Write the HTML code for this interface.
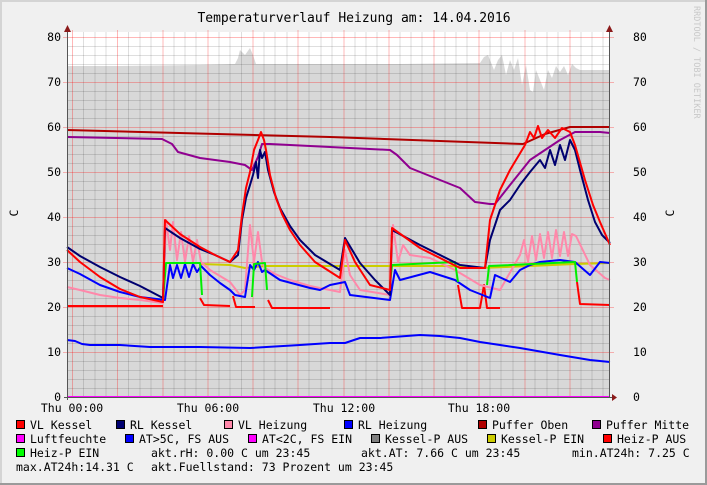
<!DOCTYPE html>
<html><head><meta charset="utf-8"><style>
html,body{margin:0;padding:0}
body{width:707px;height:485px;overflow:hidden;background:#f0f0f0;font-family:"DejaVu Sans Mono","Liberation Mono",monospace}
svg{position:absolute;left:0;top:0}
</style></head><body>
<svg width="707" height="485" viewBox="0 0 707 485" xmlns="http://www.w3.org/2000/svg" font-family="DejaVu Sans Mono, Liberation Mono, monospace">
<rect x="0" y="0" width="707" height="485" fill="#f0f0f0"/>
<path d="M0,1H706M1,0V484" stroke="#d4d4d4" stroke-width="2"/>
<path d="M0,484H707M706,0V485" stroke="#9a9a9a" stroke-width="2"/>
<rect x="67" y="32" width="543" height="365" fill="#fff"/>
<polygon fill="#d8d8d8" points="67,397 67,66 120,66 200,65 235,64 238,58 240,50 245,55 250,48 253,55 256,64 300,64 400,64 480,63 484,57 488,55 490,60 494,70 498,60 502,55 506,75 510,60 514,70 518,58 522,85 526,65 530,90 533,92 536,70 540,80 544,90 548,70 552,78 556,66 560,72 564,66 568,75 572,64 576,68 580,70 610,70 610,397"/>
<g stroke="#000" stroke-opacity="0.13" stroke-width="1">
<path d="M83.5,32V397M95,32V397M106,32V397M128.5,32V397M140,32V397M151,32V397M174,32V397M185,32V397M196,32V397M219,32V397M230,32V397M241.5,32V397M264,32V397M275,32V397M287,32V397M309,32V397M321,32V397M332,32V397M355,32V397M366,32V397M377,32V397M400,32V397M411,32V397M422,32V397M445,32V397M456,32V397M467,32V397M490,32V397M501,32V397M513,32V397M535,32V397M547,32V397M558,32V397M581,32V397M592,32V397M603,32V397"/>
<path d="M67,46.5H610M67,55.5H610M67,64.5H610M67,73.5H610M67,91.5H610M67,100.5H610M67,109.5H610M67,118.5H610M67,136.5H610M67,145.5H610M67,154.5H610M67,163.5H610M67,181.5H610M67,190.5H610M67,199.5H610M67,208.5H610M67,226.5H610M67,235.5H610M67,244.5H610M67,253.5H610M67,271.5H610M67,280.5H610M67,289.5H610M67,298.5H610M67,316.5H610M67,325.5H610M67,334.5H610M67,343.5H610M67,361.5H610M67,370.5H610M67,379.5H610M67,388.5H610"/>
</g>
<g stroke="#ff0000" stroke-opacity="0.28" stroke-width="1">
<path d="M72.5,30V397M117.5,30V397M163,30V397M208,30V397M253,30V397M298,30V397M344,30V397M389,30V397M434,30V397M479,30V397M525,30V397M570,30V397"/>
<path d="M63,37.5H614M63,82.5H614M63,127.5H614M63,172.5H614M63,217.5H614M63,262.5H614M63,307.5H614M63,352.5H614"/>
</g>
<g fill="none" stroke-width="2" stroke-linejoin="round">
<polyline stroke="#b00000" points="67,130 330,137 523,144 545,134 570,127 610,127"/>
<polyline stroke="#900090" points="67,137 162,139 172,144 178,152 200,158 230,162 245,165 252,170 258,157 262,144 270,144 330,147 390,150 397,155 410,168 435,178 460,188 475,202 490,204 495,204 510,185 530,160 560,140 575,132 600,132 610,133"/>
<polyline stroke="#0000ff" points="67,340 75,341 82,344 90,345 100,345 120,345 150,347 200,347 250,348 300,345 330,343 345,343 360,338 380,338 420,335 440,336 460,338 480,342 500,345 520,348 560,355 590,360 610,362"/>
<polyline stroke="#cccc00" points="200,264 230,265 245,268 265,266 300,266 390,266 450,266 480,268 530,266 575,264 610,263"/>
<polyline stroke="#ff0000" points="67,306 163,306"/>
<polyline stroke="#ff0000" points="200,298 204,305 230,306"/>
<polyline stroke="#ff0000" points="233,296 236,307 255,307"/>
<polyline stroke="#ff0000" points="268,300 272,308 330,308"/>
<polyline stroke="#ff0000" points="458,285 462,308 480,308 484,285 487,308 500,308"/>
<polyline stroke="#ff0000" points="577,282 580,304 610,305"/>
<polyline stroke="#ff88aa" points="67,287 80,290 100,295 120,298 140,300 163,303 166,220 170,250 173,222 177,260 181,232 185,262 189,236 193,262 197,240 201,262 210,270 230,282 240,295 245,290 250,225 254,262 258,232 262,262 265,268 275,274 290,280 310,286 340,292 345,250 350,275 360,290 390,295 393,225 398,262 403,245 410,255 430,258 455,270 480,285 500,290 520,255 524,240 528,262 532,236 536,260 540,234 544,258 548,232 552,258 556,230 560,256 564,232 568,256 572,234 576,236 590,265 605,278 610,280"/>
<polyline stroke="#0000ff" points="67,268 80,274 100,285 120,292 140,297 165,300 170,265 173,278 177,265 181,278 185,264 189,277 193,264 197,272 201,266 210,275 220,283 230,290 235,295 245,297 250,265 254,270 258,262 262,272 265,270 280,280 310,288 320,290 330,285 345,282 350,295 390,300 395,270 400,280 430,272 455,280 470,290 490,298 495,275 510,282 520,270 530,265 540,262 560,260 575,262 590,275 600,262 610,263"/>
<polyline stroke="#00ee00" points="163,300 166,263 200,263 202,295"/>
<polyline stroke="#00ee00" points="252,297 254,264 265,263 267,290"/>
<polyline stroke="#00ee00" points="390,284 392,265 455,262 458,282"/>
<polyline stroke="#00ee00" points="487,285 489,266 575,262 577,282"/>
<polyline stroke="#000070" points="67,247 80,256 100,267 120,277 140,286 163,298 165,228 180,238 200,249 215,255 230,262 238,255 242,220 246,198 250,185 253,175 256,162 258,178 260,150 262,158 265,152 268,170 274,192 280,208 290,226 300,240 315,255 340,270 345,238 360,263 375,280 390,295 392,230 420,245 460,265 485,268 490,240 495,225 500,210 510,200 520,185 530,172 540,160 545,168 550,150 555,165 560,145 565,160 570,140 575,150 580,170 588,200 595,222 602,235 610,243"/>
<polyline stroke="#ff0000" points="67,250 80,262 100,277 120,289 140,297 163,302 165,220 180,234 200,247 215,255 230,262 238,250 242,215 246,188 250,172 254,150 258,140 261,132 264,140 266,150 270,175 276,198 282,214 290,230 300,245 315,262 340,278 345,240 355,262 370,285 390,290 392,228 420,248 460,268 485,268 490,220 500,190 510,170 525,145 530,132 534,138 538,126 542,138 548,130 555,138 562,128 570,132 575,145 585,180 593,205 600,222 610,245"/>
<polyline stroke="#ff00ff" points="67,397 610,397"/>
</g>
<path d="M67.5,30V400M609.5,30V397M64,397.5H614" stroke="#555" stroke-width="1"/>
<path d="M64,32L67.5,25L71,32Z M606,32L609.5,25L613,32Z M612,394L617,397.5L612,401Z" fill="#8b1a1a"/>
<text x="354" y="22" font-size="13" text-anchor="middle" fill="#000">Temperaturverlauf Heizung am: 14.04.2016</text>
<g font-size="11.5" fill="#000">
<g text-anchor="end">
<text x="61" y="41">80</text><text x="61" y="86">70</text><text x="61" y="131">60</text><text x="61" y="176">50</text><text x="61" y="221">40</text><text x="61" y="266">30</text><text x="61" y="311">20</text><text x="61" y="356">10</text><text x="61" y="401">0</text>
</g>
<text x="633" y="41">80</text><text x="633" y="86">70</text><text x="633" y="131">60</text><text x="633" y="176">50</text><text x="633" y="221">40</text><text x="633" y="266">30</text><text x="633" y="311">20</text><text x="633" y="356">10</text><text x="633" y="401">0</text>
<text transform="translate(18,213) rotate(-90)" text-anchor="middle">C</text>
<text transform="translate(674,213) rotate(-90)" text-anchor="middle">C</text>
<g text-anchor="middle"><text x="72" y="412">Thu 00:00</text><text x="208" y="412">Thu 06:00</text><text x="344" y="412">Thu 12:00</text><text x="479" y="412">Thu 18:00</text></g>
</g>
<text transform="translate(694,6) rotate(90)" font-size="8.5" fill="#c8c8c8">RRDTOOL / TOBI OETIKER</text>
<g stroke="#000" stroke-width="1">
<rect x="16.5" y="420.5" width="8" height="8" fill="#ff0000"/>
<rect x="116.5" y="420.5" width="8" height="8" fill="#000070"/>
<rect x="224.5" y="420.5" width="8" height="8" fill="#ff88aa"/>
<rect x="344.5" y="420.5" width="8" height="8" fill="#0000ff"/>
<rect x="478.5" y="420.5" width="8" height="8" fill="#b00000"/>
<rect x="592.5" y="420.5" width="8" height="8" fill="#900090"/>
<rect x="16.5" y="434.5" width="8" height="8" fill="#ff00ff"/>
<rect x="125.5" y="434.5" width="8" height="8" fill="#0000ff"/>
<rect x="248.5" y="434.5" width="8" height="8" fill="#ff00ff"/>
<rect x="371.5" y="434.5" width="8" height="8" fill="#808080"/>
<rect x="487.5" y="434.5" width="8" height="8" fill="#cccc00"/>
<rect x="603.5" y="434.5" width="8" height="8" fill="#ff0000"/>
<rect x="16.5" y="448.5" width="8" height="8" fill="#00ff00"/>
</g>
<g font-size="11.5" fill="#000" xml:space="preserve">
<text x="30" y="429">VL Kessel</text><text x="130" y="429">RL Kessel</text><text x="238" y="429">VL Heizung</text><text x="358" y="429">RL Heizung</text><text x="492" y="429">Puffer Oben</text><text x="606" y="429">Puffer Mitte</text>
<text x="30" y="443">Luftfeuchte</text><text x="139" y="443">AT&gt;5C, FS AUS</text><text x="262" y="443">AT&lt;2C, FS EIN</text><text x="385" y="443">Kessel-P AUS</text><text x="501" y="443">Kessel-P EIN</text><text x="617" y="443">Heiz-P AUS</text>
<text x="30" y="457">Heiz-P EIN</text><text x="151" y="457">akt.rH: 0.00 C um 23:45</text><text x="361" y="457">akt.AT: 7.66 C um 23:45</text><text x="572" y="457">min.AT24h: 7.25 C</text>
<text x="16" y="471">max.AT24h:14.31 C</text><text x="151" y="471">akt.Fuellstand:   73 Prozent um 23:45</text>
</g>
</svg>
</body></html>
